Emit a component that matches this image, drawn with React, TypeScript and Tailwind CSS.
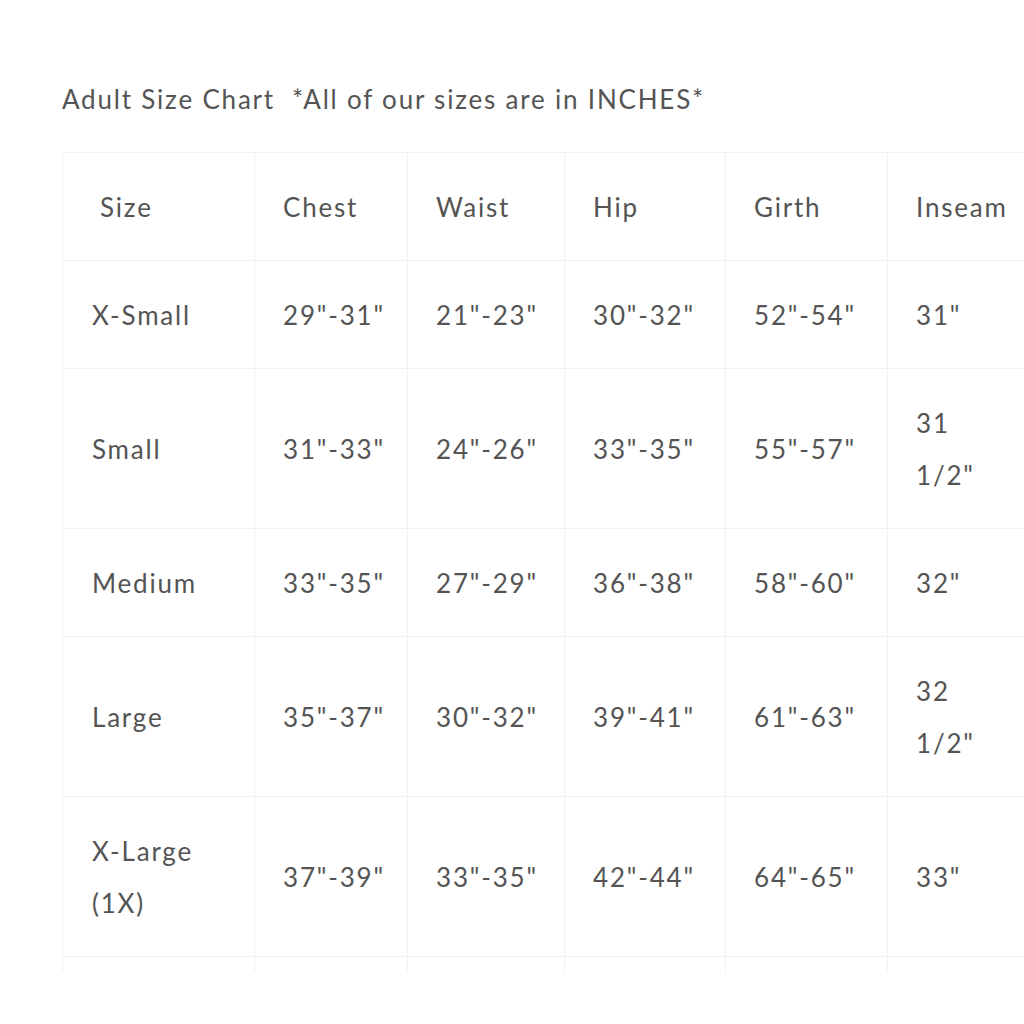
const rows: { size: string[]; cells: string[]; inseam: string[] }[] = [
  { size: ['X-Small'], cells: ['29"-31"', '21"-23"', '30"-32"', '52"-54"'], inseam: ['31"'] },
  { size: ['Small'], cells: ['31"-33"', '24"-26"', '33"-35"', '55"-57"'], inseam: ['31', '1/2"'] },
  { size: ['Medium'], cells: ['33"-35"', '27"-29"', '36"-38"', '58"-60"'], inseam: ['32"'] },
  { size: ['Large'], cells: ['35"-37"', '30"-32"', '39"-41"', '61"-63"'], inseam: ['32', '1/2"'] },
  { size: ['X-Large', '(1X)'], cells: ['37"-39"', '33"-35"', '42"-44"', '64"-65"'], inseam: ['33"'] },
  { size: [''], cells: ['', '', '', ''], inseam: [''] },
];

const headers = ['Chest', 'Waist', 'Hip', 'Girth', 'Inseam'];

function Lines({ lines }: { lines: string[] }) {
  return (
    <>
      {lines.map((l, i) => (
        <div key={i}>{l || '\u00a0'}</div>
      ))}
    </>
  );
}

export default function App() {
  return (
    <div className="w-[1024px] h-[1024px] overflow-hidden bg-white text-[#545454] tracking-[1.8px] font-['Lato','Open_Sans',sans-serif]">
      <div className="pl-[62px] pt-[80px]">
        {/* Titolo */}
        <p className="text-[26px] leading-[39px] whitespace-pre">Adult Size Chart  *All of our sizes are in INCHES*</p>

        {/* Tabella taglie, tagliata in fondo */}
        <div className="mt-[33px] h-[820px] overflow-hidden">
          <table className="table-fixed border-collapse text-[26px] leading-[52px] w-[1100px]">
            <colgroup>
              <col className="w-[192px]" />
              <col className="w-[153px]" />
              <col className="w-[157px]" />
              <col className="w-[161px]" />
              <col className="w-[162px]" />
              <col className="w-[140px]" />
              <col />
            </colgroup>
            <thead>
              <tr>
                <th className="border border-[#f1f1f1] pl-[37px] pr-[20px] pt-[28px] pb-[27px] text-left font-normal">Size</th>
                {headers.map((h) => (
                  <th key={h} className="border border-[#f1f1f1] pl-[28px] pr-[10px] pt-[28px] pb-[27px] text-left font-normal">
                    {h}
                  </th>
                ))}
                <th className="border border-[#f1f1f1]" />
              </tr>
            </thead>
            <tbody>
              {rows.map((r, i) => (
                <tr key={i}>
                  <td className="border border-[#f1f1f1] pl-[29px] pr-[20px] pt-[28px] pb-[27px] align-middle">
                    <Lines lines={r.size} />
                  </td>
                  {r.cells.map((c, j) => (
                    <td key={j} className="border border-[#f1f1f1] pl-[28px] pr-[4px] pt-[28px] pb-[27px] align-middle whitespace-nowrap">
                      {c || '\u00a0'}
                    </td>
                  ))}
                  <td className="border border-[#f1f1f1] pl-[28px] pr-[20px] pt-[28px] pb-[27px] align-middle">
                    <Lines lines={r.inseam} />
                  </td>
                  <td className="border border-[#f1f1f1]" />
                </tr>
              ))}
            </tbody>
          </table>
        </div>
      </div>
    </div>
  );
}
